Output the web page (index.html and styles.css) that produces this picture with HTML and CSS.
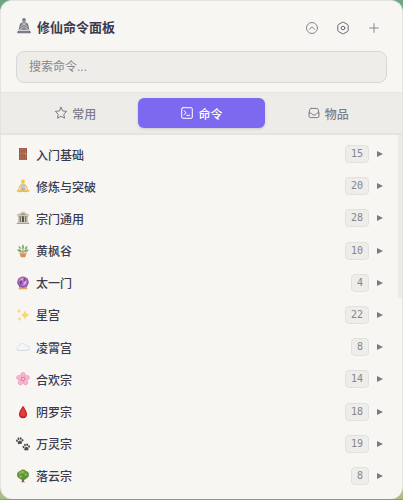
FILE: index.html
```html
<!DOCTYPE html>
<html lang="zh-CN">
<head>
<meta charset="utf-8">
<meta name="viewport" content="width=device-width, initial-scale=1">
<title>修仙命令面板</title>
<link rel="stylesheet" href="styles.css">
</head>
<body>
<main class="panel">
  <header class="header">
    <div class="title-row">
      <svg class="logo" viewBox="0 0 14 16" aria-hidden="true"><circle cx="7" cy="2" r="1.9"/><path d="M5.5 4.2h3c2 .3 2.7 1.5 3.2 4.2l.6 3.3H1.7l.6-3.3C2.8 5.700 3.500 4.500 5.500 4.200z"/><path d="M1.500 12.300h11l1.300 1.600c.3.800 0 1.300-.8 1.300H1c-.8 0-1.100-.5-.8-1.300z"/><path class="logo-line" d="M3.500 8.700 7 6l3.500 2.700M2.800 11.300 7 8.600l4.200 2.700M5.300 5.300 7 6.200l1.700-.9M1.500 12.500h11"/></svg>
      <h1 class="title">修仙命令面板</h1>
      <div class="actions">
        <button class="icon-button" type="button" aria-label="收起"><svg viewBox="0 0 14 14"><circle cx="7" cy="7" r="5.500"/><path d="m4.500 8.200 2.500-2.400 2.500 2.400"/></svg></button>
        <button class="icon-button icon-button-strong" type="button" aria-label="设置"><svg viewBox="0 0 14 14"><path d="M6.200 1.400q.8-.4 1.600 0l3.700 2.100q.7.400.7 1.200v4.600q0 .8-.7 1.200l-3.700 2.100q-.8.400-1.600 0l-3.700-2.100q-.7-.4-.7-1.200V4.700q0-.8.700-1.200z"/><circle cx="7" cy="7" r="1.800"/></svg></button>
        <button class="icon-button" type="button" aria-label="添加"><svg viewBox="0 0 14 14"><path d="M7 2.700v8.600M2.700 7h8.600"/></svg></button>
      </div>
    </div>
    <input class="search" type="text" aria-label="搜索命令" placeholder="搜索命令...">
  </header>
  <nav class="tabs">
    <button class="tab" type="button"><svg viewBox="0 0 14 14"><path d="m7 1.300 1.700 3.600 4 .5-2.900 2.800.7 4L7 10.300l-3.500 1.900.7-4-2.900-2.800 4-.5z"/></svg>常用</button>
    <button class="tab tab-active" type="button"><svg viewBox="0 0 14 14"><rect x="1.700" y="1.700" width="10.600" height="10.600" rx="1.200"/><path d="m4 4.700 2.200 2L4 8.700M6.800 9.300h2.800"/></svg>命令</button>
    <button class="tab" type="button"><svg viewBox="0 0 14 14"><path d="M4.200 2.400h5.600q1 0 1.300.9l.8 3.600v3.400q0 1.300-1.300 1.300H3.400q-1.300 0-1.300-1.300V6.900l.8-3.600q.3-.9 1.300-.9z"/><path d="M2.100 7h1.500q.6 0 .9.500.8 1.500 2.500 1.500t2.500-1.500q.3-.5.900-.5h1.500"/></svg>物品</button>
  </nav>
  <div class="list">
    <button class="row" type="button">
      <svg class="emoji" viewBox="0 0 14 14"><path fill="#8b4e36" d="M3 1h8v12H3z"/><path fill="#b8725a" d="M3.600 1.500h6.800v11.200H3.600z"/><path fill="#9d5b44" d="M4.800 2.500h1.800v3.200H4.800zm2.600 0h1.800v3.200H7.400zM4.800 7h1.800v4.800H4.800zm2.600 0h1.800v4.800H7.400z"/><circle cx="9.700" cy="7" r=".6" fill="#f0ded0"/></svg>
      <span class="name">入门基础</span><span class="count">15</span><span class="arrow"></span>
    </button>
    <button class="row" type="button">
      <svg class="emoji" viewBox="0 0 14 14"><path fill="#f6c64c" d="M7 .5q1.900 0 1.900 2.300Q8.900 5 7 5T5.100 2.800Q5.100.5 7 .5z"/><path fill="#c2c6cf" d="M5.500 5h3l1.300 1.500-.7 3.500H4.900l-.7-3.500z"/><path fill="none" stroke="#f4c355" stroke-width="1.300" stroke-linecap="round" stroke-linejoin="round" d="M5.200 5.700 3.500 8.200l-1 2M8.800 5.700l1.700 2.500 1 2"/><path fill="#adb2bd" d="M3.500 10.300 7 9l3.500 1.300-2.200 1.500H5.700z"/><path fill="none" stroke="#f1b73f" stroke-width="1.700" stroke-linecap="round" d="M1.500 11.800c2 .6 4.200.7 5.500-.2 1.300.9 3.500.8 5.500.2"/></svg>
      <span class="name">修炼与突破</span><span class="count">20</span><span class="arrow"></span>
    </button>
    <button class="row" type="button">
      <svg class="emoji" viewBox="0 0 14 14"><path fill="#55564e" d="M2 5h10v7H2z"/><path fill="#d0c8b3" d="M1 4.300V3.200L5 1.700V.8h4v.9l4 1.500v2.100H1z"/><path fill="#8c897c" d="m3.500 3.800 3.500-1.500 3.500 1.500z"/><path fill="#cfc8b6" d="M2 5.300h1.800V11H2zm2.700 0h1.300V11H4.700zm3.300 0h1.300V11H8zm2.200 0H12V11h-1.800zM1.400 11h11.200v1H1.400z"/><path fill="#aaa494" d="M.7 12h12.600v1H.7z"/></svg>
      <span class="name">宗门通用</span><span class="count">28</span><span class="arrow"></span>
    </button>
    <button class="row" type="button">
      <svg class="emoji" viewBox="0 0 14 14"><path fill="none" stroke="#6c9b59" stroke-width=".8" d="M7 9V3M7 8.500 3 5M7 8.500 11 4"/><path fill="#73a564" d="M7 5Q5.200 2.500 7 .3 8.800 2.500 7 5zM5.500 5Q3 5 2.200 2 5 2.300 5.500 5zm3 0q.5-2.600 3-3Q11.500 5 8.500 5zM6 7.800Q2.500 8.400 1 5.700 4.500 5.200 6 7.800zm2 0q3.500.6 5-2.100Q9.500 5.200 8 7.800z"/><path fill="#d98b55" d="M3.800 9.700h6.400l-.9 3.600H4.700z"/><path fill="#e8a871" d="M3.300 8.500h7.400v1.700H3.300z"/></svg>
      <span class="name">黄枫谷</span><span class="count">10</span><span class="arrow"></span>
    </button>
    <button class="row" type="button">
      <svg class="emoji" viewBox="0 0 14 14"><path fill="#d39959" d="M3.700 10h6.600l1.200 3.300h-9z"/><circle cx="7" cy="6.200" r="5.700" fill="#87509a"/><circle cx="7" cy="5.900" r="4.700" fill="#ad6fc2"/><path fill="#dfb7e6" d="M3.500 5Q4.500 2 7.500 2L5.700 5zm4.400 1 2.500-2-.6 3.500-2.500 1.800z"/><path fill="#804293" d="M5 3.500 6.300 6 5 9.500 3.300 7zM8 2l2 1.800L8 6z"/><path fill="#e6ad64" d="m3 12.700 1-1.600q3 1.400 6 0l1 1.600z"/></svg>
      <span class="name">太一门</span><span class="count">4</span><span class="arrow"></span>
    </button>
    <button class="row" type="button">
      <svg class="emoji" viewBox="0 0 14 14"><path fill="#fbd871" d="M9 1.600q.6 4.700 4.700 5.400Q9.600 7.700 9 12.300 8.400 7.700 4.300 7 8.400 6.300 9 1.600zM3 .7q.3 2 2.200 2.300Q3.300 3.300 3 5.300 2.700 3.300.8 3 2.700 2.700 3 .7zM3.500 8.700q.3 2 2 2.200-1.700.3-2 2.300-.3-2-2-2.300 1.700-.2 2-2.200z"/></svg>
      <span class="name">星宫</span><span class="count">22</span><span class="arrow"></span>
    </button>
    <button class="row" type="button">
      <svg class="emoji" viewBox="0 0 14 14"><path fill="#d5dae3" d="M3 11Q.3 10.800.3 8.500q0-2 2.400-2.300Q3.500 3 6.500 3q2.500 0 3.400 2.300 3.700.2 3.800 3 0 2.700-3 2.700z"/><path fill="#f5f6f9" d="M3 9.800Q1 9.700 1 8.200q.2-1.400 2.300-1.400.8-3.200 3.200-3.200 2 0 2.800 2.300 3.500 0 3.700 2Q12.700 10 10 9.800z"/></svg>
      <span class="name">凌霄宫</span><span class="count">8</span><span class="arrow"></span>
    </button>
    <button class="row" type="button">
      <svg class="emoji" viewBox="0 0 14 14"><g fill="#f7b2d5" stroke="#e891bd" stroke-width=".4"><ellipse cx="7" cy="3.200" rx="2.400" ry="3"/><ellipse cx="7" cy="3.200" rx="2.400" ry="3" transform="rotate(72 7 7)"/><ellipse cx="7" cy="3.200" rx="2.400" ry="3" transform="rotate(144 7 7)"/><ellipse cx="7" cy="3.200" rx="2.400" ry="3" transform="rotate(216 7 7)"/><ellipse cx="7" cy="3.200" rx="2.400" ry="3" transform="rotate(288 7 7)"/></g><circle cx="7" cy="7" r="2" fill="#d76b99"/><circle cx="7" cy="7" r="1.300" fill="#f7d56f"/></svg>
      <span class="name">合欢宗</span><span class="count">14</span><span class="arrow"></span>
    </button>
    <button class="row" type="button">
      <svg class="emoji" viewBox="0 0 14 14"><path fill="#bd1f24" d="M7 .7q4 5.700 4 8.500 0 4-4 4t-4-4Q3 6.400 7 .7z"/><path fill="#e53c3d" d="M7 2.600q2.700 4.200 2.700 6.500 0 2.600-2.500 2.600-2.900 0-2.900-2.700Q4.300 7 7 2.600z"/></svg>
      <span class="name">阴罗宗</span><span class="count">18</span><span class="arrow"></span>
    </button>
    <button class="row" type="button">
      <svg class="emoji" viewBox="0 0 14 14" fill="#4b4c55"><g id="paw"><path d="M3.700 3.500q1.500 0 2.300 1.600.5 1.900-1.100 1.900-.8-.3-1.500.1-1.900.3-1.700-1.400.5-2.200 2-2.200z"/><ellipse cx="1" cy="3.700" rx=".9" ry="1.200"/><ellipse cx="2.500" cy="1.700" rx=".9" ry="1.200"/><ellipse cx="4.700" cy="1.500" rx=".9" ry="1.200"/><ellipse cx="6.500" cy="3.200" rx=".9" ry="1.200"/></g><use href="#paw" x="6.500" y="6.300"/></svg>
      <span class="name">万灵宗</span><span class="count">19</span><span class="arrow"></span>
    </button>
    <button class="row" type="button">
      <svg class="emoji" viewBox="0 0 14 14"><path fill="#8a6545" d="M6.100 8h1.800l.2 4.300.9 1H5l.9-1z"/><path fill="#5d9238" d="M4 2Q7-.9 10 2q3 .8 2.900 3.600.3 3.200-2.500 3.900Q8.500 11.500 7 10.200q-2 1.100-3.500-.6Q.7 8.600 1.100 5.500 1.100 2.800 4 2z"/><path fill="#90ba58" d="M4 3q3-2.600 5 0L7.800 4.600 5.500 4 3.700 5.800 2.500 5zm5.500 1 2 1.400L10 7 8.300 6zM3 7l2-1 1.600 1.500L5 9z"/></svg>
      <span class="name">落云宗</span><span class="count">8</span><span class="arrow"></span>
    </button>
    <span class="scroll-thumb"></span>
  </div>
</main>
</body>
</html>
```
FILE: styles.css
```css
* { box-sizing: border-box; }

body {
  margin: 0;
  background: linear-gradient(#6fa583, #a9be86);
  color: #3b3b50;
  font-family: "Liberation Sans", "Noto Sans CJK SC", sans-serif;
}

button, input { font-family: inherit; }

button {
  border: 0;
  padding: 0;
  background: none;
  cursor: pointer;
}

.panel {
  display: flex;
  flex-direction: column;
  min-height: calc(100vh - 1px);
  overflow: hidden;
  border: 1px solid #e4e4e0;
  border-bottom: 0;
  border-radius: 12px;
  background: #f7f6f2;
}

.header { padding: 14px 15px 9px; }

.title-row {
  display: flex;
  align-items: center;
  height: 26px;
  margin-bottom: 10px;
}

.logo {
  width: 14px;
  height: 16px;
  margin: 0 6px 4px 1px;
  fill: #7c7c88;
}

.logo-line {
  fill: none;
  stroke: #f7f6f2;
  stroke-width: .6;
}

.title {
  margin: 0;
  font-size: 13px;
  line-height: 20px;
  font-weight: 600;
}

.actions {
  display: flex;
  gap: 7px;
  margin: 0 1px 0 auto;
}

.icon-button {
  display: grid;
  place-items: center;
  width: 24px;
  height: 24px;
  color: #858590;
}

.icon-button-strong { color: #696975; }

.icon-button svg, .tab svg {
  width: 14px;
  height: 14px;
  fill: none;
  stroke: currentColor;
  stroke-width: 1;
  stroke-linecap: round;
  stroke-linejoin: round;
}

.search {
  display: block;
  width: 100%;
  height: 32px;
  padding: 0 12px;
  border: 1px solid #d7d7d6;
  border-radius: 8px;
  outline: 0;
  background: #eeede9;
  color: inherit;
  font-size: 12px;
}

.search::placeholder {
  color: #868690;
  opacity: 1;
}

.tabs {
  display: flex;
  padding: 5px 11px;
  border: solid #e3e3df;
  border-width: 1px 0 2px;
  background: #edece8;
}

.tab {
  display: flex;
  flex: 1;
  align-items: center;
  justify-content: center;
  gap: 4px;
  height: 30px;
  border-radius: 6px;
  color: #7b7b87;
  font-size: 12px;
  font-weight: 500;
}

.tab-active {
  background: #7c69ef;
  box-shadow: 0 1px 3px #00000026;
  color: #fff;
}

.list {
  position: relative;
  display: grid;
  flex: 1;
  grid-auto-rows: 1fr;
  padding: 3px 15px 7px;
}

.row {
  display: flex;
  align-items: center;
  min-height: 32px;
  color: inherit;
  text-align: left;
}

.emoji {
  width: 14px;
  height: 14px;
  margin-right: 6px;
}

.name {
  flex: 1;
  font-size: 12px;
  font-weight: 500;
}

.count {
  padding: 0 5px;
  border: 1px solid #e1e1de;
  border-radius: 4px;
  background: #eeede9;
  color: #858590;
  font: 10px/16px "DejaVu Sans Mono", monospace;
}

.arrow {
  width: 0;
  height: 0;
  margin: 0 4px 0 8px;
  border: solid transparent;
  border-width: 3px 0 3px 6px;
  border-left-color: #7b7b87;
}

.scroll-thumb {
  position: absolute;
  top: 0;
  right: 0;
  width: 4px;
  height: 45%;
  border-radius: 0 0 2px 2px;
  background: #ebebe8;
}
```
